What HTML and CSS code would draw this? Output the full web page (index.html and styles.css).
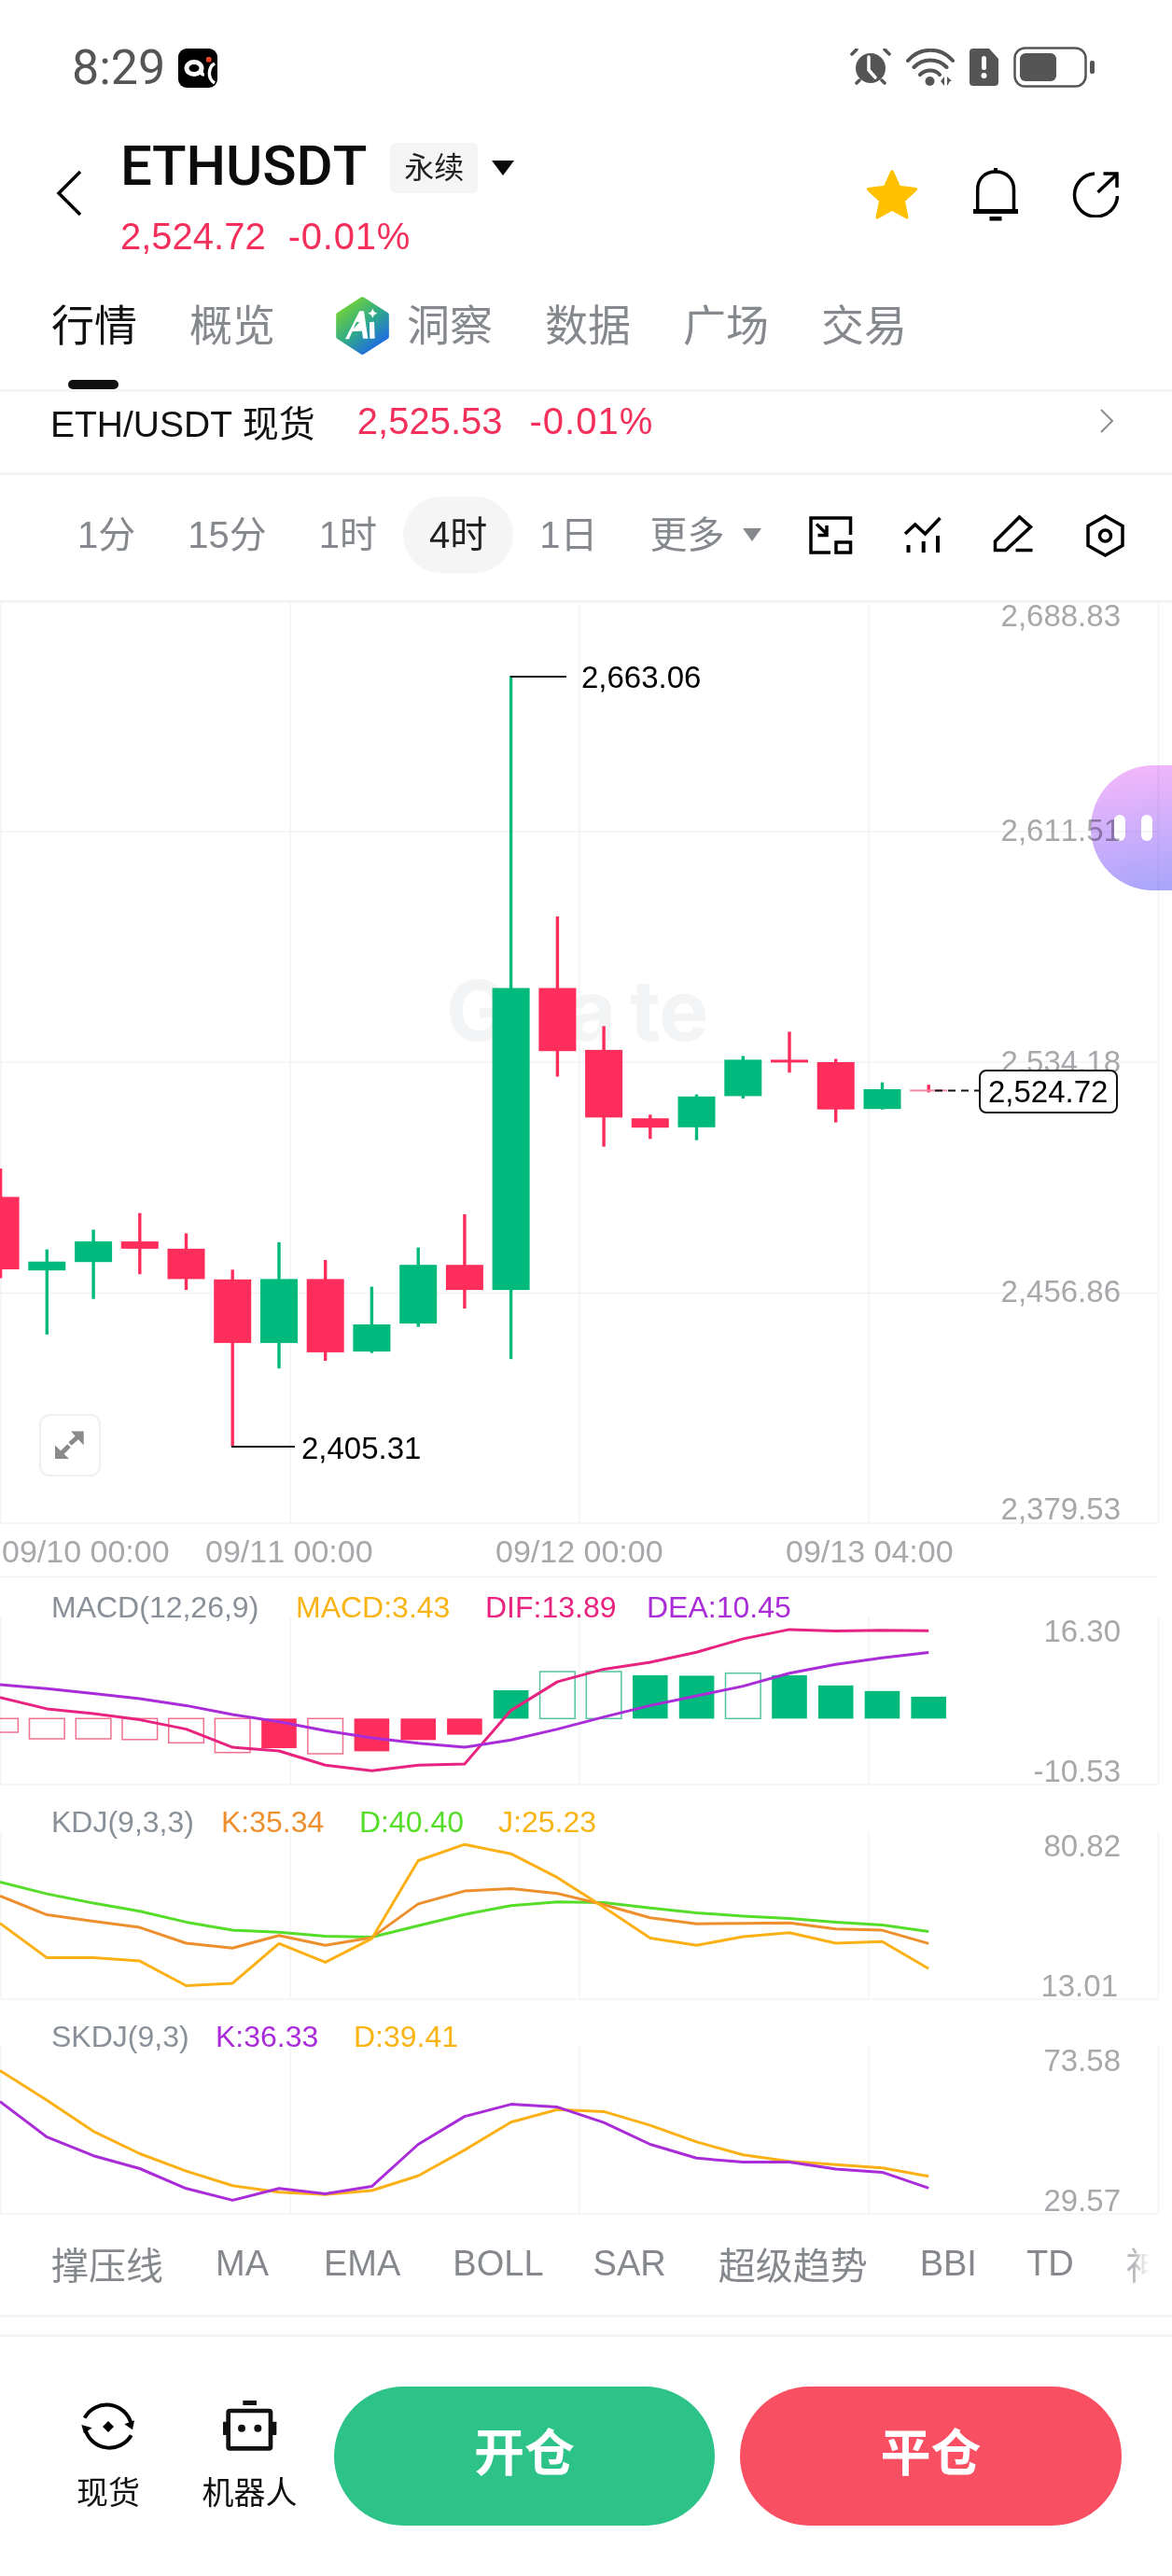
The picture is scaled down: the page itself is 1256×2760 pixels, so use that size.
FILE: index.html
```html
<!DOCTYPE html>
<html lang="zh-CN">
<head>
  <meta charset="UTF-8">
  <title>ETHUSDT</title>
  <link rel="stylesheet" href="styles.css">
</head>
<body>
<div class="page">
  <div class="status">
    <span class="time">8:29</span>
    <svg class="app-icon" width="42" height="42" viewBox="0 0 42 42">
      <rect width="42" height="42" rx="9" fill="#000"/>
      <ellipse cx="17" cy="21" rx="8" ry="6.500" fill="none" stroke="#fff" stroke-width="5"/>
      <path d="M25 20v6c0 1.500 1 2 3 2" fill="none" stroke="#fff" stroke-width="3.500"/>
      <rect x="30" y="9" width="5.500" height="5.500" rx="1.500" fill="#e8442a"/>
      <path d="M39 16c-7 4-8 16 0 21" fill="none" stroke="#fff" stroke-width="3.500"/>
    </svg>
    <div class="status-icons">
      <svg width="44" height="40" viewBox="0 0 44 40">
        <circle cx="22" cy="21" r="16" fill="#555"/>
        <path d="M20 9v14l7 8" fill="none" stroke="#fff" stroke-width="3.500" stroke-linecap="round"/>
        <path d="M2 6l5-5M42 6l-5-5M7 37l3-3M37 37l-3-3" stroke="#555" stroke-width="3.500" stroke-linecap="round"/>
      </svg>
      <svg width="52" height="40" viewBox="0 0 52 40">
        <path d="M2 13C15 -2 37 -2 50 13M8.500 20C18 10 34 10 43.500 20M15 28C21 22 31 22 36 28" fill="none" stroke="#555" stroke-width="4" stroke-linecap="round"/>
        <circle cx="25.500" cy="35" r="5" fill="#555"/>
        <path d="M37 35l4-5v10zM44 30l5 5h-2l-3 5z" fill="#555"/>
      </svg>
      <svg width="31" height="40" viewBox="0 0 31 40">
        <path d="M4 0h17l10 11v25a4 4 0 0 1-4 4H4a4 4 0 0 1-4-4V4a4 4 0 0 1 4-4z" fill="#555"/>
        <rect x="13" y="8" width="5" height="15" rx="2.500" fill="#fff"/>
        <circle cx="15.500" cy="29" r="3" fill="#fff"/>
      </svg>
      <svg width="88" height="44" viewBox="0 0 88 44">
        <rect x="1.500" y="1.500" width="76" height="41" rx="11" fill="none" stroke="#555" stroke-width="2.500"/>
        <rect x="7" y="7" width="39" height="30" rx="6" fill="#555"/>
        <rect x="82" y="15" width="5" height="14" rx="2" fill="#555"/>
      </svg>
    </div>
  </div>

  <div class="header">
    <svg class="back" width="28" height="50" viewBox="0 0 28 50">
      <path d="M26 2L3 25l23 23" fill="none" stroke="#000" stroke-width="3.500"/>
    </svg>
    <div class="title-col">
      <div class="title-row">
        <span class="title">ETHUSDT</span>
        <span class="badge">永续</span>
        <svg width="24" height="16" viewBox="0 0 24 16"><path d="M0 0h24L12 16z" fill="#0a0a0a"/></svg>
      </div>
      <div class="price-row">
        <span>2,524.72</span>
        <span class="pct">-0.01%</span>
      </div>
    </div>
    <div class="actions">
      <svg width="58" height="56" viewBox="0 0 58 56">
        <path d="M29 4l7.500 16.500 18 2.200-13.300 12.300 3.600 17.800L29 44l-15.800 8.800 3.600-17.800L3.500 22.700l18-2.200z" fill="#ffc000" stroke="#ffc000" stroke-width="3.500" stroke-linejoin="round"/>
      </svg>
      <svg width="48" height="57" viewBox="0 0 48 57">
        <path d="M4.700 44V23C4.700 12 12 4 24 4s19.500 8 19.500 19v21" fill="none" stroke="#000" stroke-width="3.500"/>
        <rect y="44" width="48" height="5" fill="#000"/>
        <rect x="17.500" y="52" width="13" height="4.500" fill="#000"/>
        <rect x="22" width="4" height="5" fill="#000"/>
      </svg>
      <svg width="50" height="50" viewBox="0 0 50 50">
        <path d="M24 3A23 23 0 1 0 48.500 27" fill="none" stroke="#000" stroke-width="3.500"/>
        <path d="M27.500 23L47 4.500M33.500 3H48v15" fill="none" stroke="#000" stroke-width="3.500"/>
      </svg>
    </div>
  </div>

  <div class="tabs">
    <span class="tab active">行情</span>
    <span class="tab">概览</span>
    <svg class="ai-icon" width="57" height="62" viewBox="30 20 171 186">
      <defs>
        <linearGradient id="aiFill" x1="0.150" y1="0.100" x2="0.800" y2="0.950">
          <stop offset="0" stop-color="#6fd03c"/>
          <stop offset="0.500" stop-color="#2fa98a"/>
          <stop offset="1" stop-color="#1f68e6"/>
        </linearGradient>
      </defs>
      <polygon points="115,29 192,78 192,148 115,197 39,148 39,78" fill="url(#aiFill)" stroke="url(#aiFill)" stroke-width="17" stroke-linejoin="round"/>
      <path d="M60 156L106 66h14l13 88h-16l-3-24-36 2 28-30-10-2-24 56z" fill="#fff"/>
      <path d="M138 102l15-2 2 54h-16z" fill="#fff"/>
      <path d="M148 58l5 10 10 5-10 5-5 10-5-10-10-5 10-5z" fill="#fff"/>
    </svg>
    <span class="tab tab-ai">洞察</span>
    <span class="tab">数据</span>
    <span class="tab">广场</span>
    <span class="tab">交易</span>
  </div>

  <div class="spot-row">
    <span class="spot-name">ETH/USDT 现货</span>
    <span class="spot-price">2,525.53</span>
    <span class="spot-pct">-0.01%</span>
    <svg class="spot-arrow" width="16" height="28" viewBox="0 0 16 28">
      <path d="M2 2l12 12L2 26" fill="none" stroke="#8a8d91" stroke-width="2"/>
    </svg>
  </div>

  <div class="period-row">
    <span class="period">1分</span>
    <span class="period">15分</span>
    <span class="period">1时</span>
    <span class="period on">4时</span>
    <span class="period">1日</span>
    <span class="period more">更多</span>
    <svg class="more-caret" width="20" height="14" viewBox="0 0 20 14"><path d="M0 0h20L10 14z" fill="#85888c"/></svg>
    <div class="tools">
      <svg width="48" height="48" viewBox="0 0 48 48" fill="none" stroke="#000" stroke-width="3.500">
        <path d="M24 43H3V6h42.500v18M30 32h15.500v11H30z"/>
        <path d="M9 12.500L20 23M20 14v10.500H10.500"/>
      </svg>
      <svg width="48" height="48" viewBox="0 0 48 48" fill="none" stroke="#000" stroke-width="3.500">
        <path d="M6 23l10.700-10L27.500 23 43.500 6"/>
        <path d="M9.500 35v8M25.700 31v12M41 25v18" stroke-width="4"/>
      </svg>
      <svg width="48" height="48" viewBox="0 0 48 48" fill="none" stroke="#000" stroke-width="3.500">
        <path d="M4.500 40.500V31L30.500 5l12 10.600-26.800 24.900zM26.500 40.500h18"/>
      </svg>
      <svg width="48" height="48" viewBox="0 0 48 48" fill="none" stroke="#000" stroke-width="3.500">
        <path d="M24.500 4L43 14.500v21L24.500 46 6 35.500v-21z"/>
        <circle cx="24.500" cy="25" r="6"/>
      </svg>
    </div>
  </div>

  <div class="chart">
    <svg id="chart" class="chart-svg" width="1256" height="1729" viewBox="0 646 1256 1729">
      <g class="grid">
        <path d="M1 646V1632M311 646V1632M621 646V1632M931 646V1632M1241.500 646V1632"/>
        <path d="M1 1732V1912M311 1732V1912M621 1732V1912M931 1732V1912M1241.500 1732V1912"/>
        <path d="M1 1962V2142M311 1962V2142M621 1962V2142M931 1962V2142M1241.500 1962V2142"/>
        <path d="M1 2192V2372M311 2192V2372M621 2192V2372M931 2192V2372M1241.500 2192V2372"/>
        <path d="M0 891H1241M0 1138H1241M0 1385.500H1241"/>
        <path d="M0 1632H1241M0 1689.500H1241M0 1912H1241M0 2142H1241M0 2372H1241"/>
      </g>
      <text class="mark" x="478 608 675 706" y="1115">Gate</text>
      <g id="plot"></g>

      <g class="axis">
        <text x="1201" y="671">2,688.83</text>
        <text x="1201" y="901">2,611.51</text>
        <text x="1201" y="1149">2,534.18</text>
        <text x="1201" y="1395">2,456.86</text>
        <text x="1201" y="1628">2,379.53</text>
        <text x="1201" y="1759">16.30</text>
        <text x="1201" y="1909">-10.53</text>
        <text x="1201" y="1989">80.82</text>
        <text x="1198" y="2139">13.01</text>
        <text x="1201" y="2219">73.58</text>
        <text x="1201" y="2369">29.57</text>
      </g>
      <g class="dates">
        <text x="2" y="1674">09/10 00:00</text>
        <text x="220" y="1674">09/11 00:00</text>
        <text x="531" y="1674">09/12 00:00</text>
        <text x="842" y="1674">09/13 04:00</text>
      </g>

      <path class="lead" d="M547 725H607M248 1550H316"/>
      <text class="callout" x="623" y="737">2,663.06</text>
      <text class="callout" x="323" y="1563">2,405.31</text>

      <path class="dash" d="M1002 1168.500H1050"/>
      <rect class="now-box" x="1050" y="1147" width="147" height="45" rx="7"/>
      <text class="callout" x="1059" y="1181">2,524.72</text>

      <g class="legend">
        <text x="55" y="1733" class="lg-grey">MACD(12,26,9)</text>
        <text x="317" y="1733" class="lg-yellow">MACD:3.43</text>
        <text x="520" y="1733" class="lg-pink">DIF:13.89</text>
        <text x="693" y="1733" class="lg-purple">DEA:10.45</text>
        <text x="55" y="1963" class="lg-grey">KDJ(9,3,3)</text>
        <text x="237" y="1963" class="lg-orange">K:35.34</text>
        <text x="385" y="1963" class="lg-green">D:40.40</text>
        <text x="534" y="1963" class="lg-yellow">J:25.23</text>
        <text x="55" y="2193" class="lg-grey">SKDJ(9,3)</text>
        <text x="231" y="2193" class="lg-purple">K:36.33</text>
        <text x="379" y="2193" class="lg-yellow">D:39.41</text>
      </g>
    </svg>

    <div class="expand">
      <svg width="62" height="62" viewBox="0 0 62 62">
        <path d="M32 16.500h13.700v15zM15 31.500V46h15z" fill="#8a8a8a"/>
        <path d="M40 22l-9 8M22 40l8-8" stroke="#8a8a8a" stroke-width="5"/>
      </svg>
    </div>
    <div class="float-btn"><i></i><i></i></div>
  </div>

  <div class="indicators">
    <div class="ind-list">
      <span class="ind zh">撑压线</span>
      <span class="ind ind-ma">MA</span>
      <span class="ind">EMA</span>
      <span class="ind ind-boll">BOLL</span>
      <span class="ind">SAR</span>
      <span class="ind zh">超级趋势</span>
      <span class="ind">BBI</span>
      <span class="ind ind-td">TD</span>
      <span class="ind zh faded">神</span>
    </div>
  </div>
  <div class="spacer"></div>

  <div class="bottom">
    <div class="tool tool-spot">
      <svg width="60" height="56" viewBox="48 36 180 168" fill="none" stroke="#000" stroke-width="12">
        <path d="M62 92A81 81 0 0 1 212 112"/>
        <path d="M212 148A81 81 0 0 1 64 128"/>
        <path d="M222 100l-32 12 26 18zM52 114l34 10-26 18z" fill="#000" stroke="none"/>
        <path d="M138 102l18 18-18 18-18-18z" fill="#000" stroke="none"/>
      </svg>
      <span>现货</span>
    </div>
    <div class="tool tool-bot">
      <svg width="60" height="56" viewBox="505 39 180 168">
        <rect x="572" y="39" width="44" height="15" fill="#111"/>
        <rect x="525" y="72" width="136" height="121" rx="5" fill="none" stroke="#111" stroke-width="14"/>
        <rect x="508" y="107" width="12" height="43" rx="2" fill="#111"/>
        <rect x="666" y="107" width="14" height="43" rx="2" fill="#111"/>
        <circle cx="568" cy="128" r="12" fill="#111"/>
        <circle cx="620" cy="128" r="12" fill="#111"/>
      </svg>
      <span>机器人</span>
    </div>
    <div class="trade open">开仓</div>
    <div class="trade close">平仓</div>
  </div>
</div>
<script src="chart.js"></script>
</body>
</html>
```

FILE: styles.css
```css
html, body {
  margin: 0;
  background: #fff;
}
body {
  font-family: "Liberation Sans", "Noto Sans CJK SC", sans-serif;
  font-kerning: none;
  color: #111;
}
svg {
  display: block;
  flex-shrink: 0;
}
.page {
  width: 1256px;
  height: 2760px;
  overflow: hidden;
}

/* status bar */
.status {
  display: flex;
  align-items: flex-start;
  height: 146px;
  padding: 52px 82px 0 77px;
  box-sizing: border-box;
}
.time {
  font-family: Roboto, sans-serif;
  font-size: 52px;
  line-height: 42px;
  color: #555;
}
.app-icon {
  margin-left: 14px;
}
.status-icons {
  display: flex;
  align-items: center;
  gap: 16px;
  margin-left: auto;
  margin-top: -2px;
}

/* header */
.header {
  display: flex;
  height: 144px;
  padding: 0 57px 0 60px;
  box-sizing: border-box;
}
.back {
  margin-top: 36px;
}
.title-col {
  margin-left: 41px;
}
.title-row {
  display: flex;
  align-items: center;
  margin-top: 7px;
  height: 54px;
}
.title {
  font-family: Roboto, sans-serif;
  font-weight: 500;
  font-size: 60px;
  line-height: 54px;
  color: #0c0c0c;
  margin-top: -4px;
}
.badge {
  margin-left: 25px;
  margin-right: 15px;
  width: 94px;
  height: 54px;
  line-height: 54px;
  text-align: center;
  background: #f5f5f5;
  border-radius: 6px;
  font-size: 32px;
  color: #222;
}
.price-row {
  display: flex;
  margin-top: 23px;
  font-size: 40px;
  line-height: 46px;
  color: #f3305c;
}
.pct {
  margin-left: 24px;
  letter-spacing: 0.8px;
}
.actions {
  display: flex;
  align-items: center;
  gap: 58px;
  margin-left: auto;
  height: 60px;
  margin-top: 32px;
}

/* tabs */
.tabs {
  display: flex;
  align-items: center;
  height: 130px;
  padding: 0 0 9px 55px;
  box-sizing: border-box;
  border-bottom: 3px solid #f3f4f5;
}
.tab {
  position: relative;
  font-size: 46px;
  line-height: 60px;
  margin-right: 56px;
  color: #85888c;
}
.tab.active {
  color: #111;
}
.tab.active::after {
  content: "";
  position: absolute;
  left: 18px;
  top: 88px;
  width: 54px;
  height: 10px;
  border-radius: 5px;
  background: #111;
}
.ai-icon {
  margin: 0 19px 0 9px;
}

/* spot row */
.spot-row {
  display: flex;
  align-items: center;
  height: 89px;
  padding: 0 62px 24px 54px;
  box-sizing: border-box;
  border-bottom: 3px solid #f3f4f5;
}
.spot-name {
  font-size: 39px;
  color: #111;
}
.spot-price {
  margin-left: 45px;
  font-size: 40px;
  color: #f3305c;
}
.spot-pct {
  margin-left: 29px;
  font-size: 40px;
  letter-spacing: 1px;
  color: #f3305c;
}
.spot-arrow {
  margin-left: auto;
}

/* period row */
.period-row {
  display: flex;
  align-items: center;
  height: 137px;
  padding: 0 48px 7px 55px;
  box-sizing: border-box;
  border-bottom: 3px solid #f3f4f5;
}
.period {
  height: 82px;
  line-height: 82px;
  padding: 0 28px;
  border-radius: 41px;
  font-size: 40px;
  color: #85888c;
}
.period.on {
  background: #f5f5f5;
  color: #222;
}
.more-caret {
  margin-left: -9px;
}
.tools {
  display: flex;
  gap: 50px;
  margin-left: auto;
}

/* chart */
.chart {
  position: relative;
  height: 1729px;
}
.chart-svg {
  overflow: visible;
}
.grid path {
  fill: none;
  stroke: #f2f3f4;
  stroke-width: 1.5;
}
.mark {
  font-family: Inter, sans-serif;
  font-weight: 700;
  font-size: 90px;
  fill: #f3f4f5;
}
.axis text {
  font-size: 33px;
  fill: #a6a8ab;
  text-anchor: end;
}
.dates text {
  font-size: 34px;
  fill: #a6a8ab;
}
.lead {
  fill: none;
  stroke: #111;
  stroke-width: 2;
}
.callout {
  font-size: 33px;
  fill: #000;
}
.dash {
  fill: none;
  stroke: #111;
  stroke-width: 2;
  stroke-dasharray: 8 6;
}
.now-box {
  fill: #fff;
  stroke: #111;
  stroke-width: 2;
}
.legend text {
  font-size: 32px;
}
.lg-grey { fill: #8a9099; }
.lg-yellow { fill: #f9b312; }
.lg-pink { fill: #e8237f; }
.lg-purple { fill: #a92cd8; }
.lg-orange { fill: #ee8f2e; }
.lg-green { fill: #55dd2a; }

.expand {
  position: absolute;
  left: 42px;
  top: 869px;
  width: 66px;
  height: 67px;
  box-sizing: border-box;
  border: 2px solid #f0f0f0;
  border-radius: 11px;
  background: #fff;
}
.float-btn {
  position: absolute;
  right: 0;
  top: 174px;
  width: 87px;
  height: 134px;
  display: flex;
  align-items: center;
  gap: 17px;
  padding-left: 25px;
  box-sizing: border-box;
  border-radius: 67px 0 0 67px;
  background: linear-gradient(170deg, #f7b8fb, #a8a5fb);
  mix-blend-mode: multiply;
}
.float-btn i {
  width: 12px;
  height: 28px;
  border-radius: 6px;
  background: #fff;
}

/* indicator row */
.indicators {
  height: 108px;
  padding: 0 0 0 55px;
  box-sizing: border-box;
  border-bottom: 3px solid #f3f4f5;
}
.ind-list {
  display: flex;
  gap: 56px;
  height: 100px;
  align-items: center;
}
.ind {
  flex-shrink: 0;
  font-size: 38px;
  color: #85888c;
  white-space: nowrap;
}
.ind.zh {
  font-size: 40px;
}
.ind-ma {
  margin-right: 3px;
}
.ind-boll {
  margin-right: -3px;
}
.ind-td {
  margin-left: -3px;
}
.ind.faded {
  color: #b5b7ba;
  -webkit-mask-image: linear-gradient(to right, #000 20%, transparent 62%);
  mask-image: linear-gradient(to right, #000 20%, transparent 62%);
}
.spacer {
  height: 21px;
  box-sizing: border-box;
  border-bottom: 3px solid #f3f4f5;
}

/* bottom bar */
.bottom {
  display: flex;
  align-items: flex-start;
  padding-top: 53px;
}
.tool {
  display: flex;
  flex-direction: column;
  align-items: center;
  padding-top: 15px;
  font-size: 34px;
  line-height: 40px;
  color: #111;
}
.tool span {
  margin-top: 23px;
  white-space: nowrap;
}
.tool-spot {
  width: 66px;
  margin-left: 83px;
}
.tool-bot {
  width: 101px;
  margin-left: 68px;
}
.trade {
  height: 149px;
  line-height: 145px;
  border-radius: 75px;
  text-align: center;
  font-size: 54px;
  font-weight: 700;
  color: #fff;
}
.open {
  width: 408px;
  margin-left: 40px;
  background: #2dc287;
}
.close {
  width: 409px;
  margin-left: 27px;
  background: #f94f63;
}
```

FILE: chart.js
```js
// numbers below are read off the picture: y is page px after the two helpers
var RED = '#ff2d5c', GREEN = '#00b97c';
var yA = function (p) { return 1020 + p / 2.306; };
var yB = function (p) { return 1680 + p / 2.306; };
var xAt = function (i) { return 0.6 + 49.73 * i; };

// color, wick top, body top, body bottom, wick bottom
var candles = [
  ['r', 535, 605, 784, 806],
  ['g', 735, 765, 787, 945],
  ['g', 686, 715, 766, 857],
  ['r', 645, 715, 733, 796],
  ['r', 695, 733, 808, 835],
  ['r', 785, 809, 966, 1222],
  ['g', 717, 808, 966, 1029],
  ['r', 761, 808, 989, 1010],
  ['g', 827, 920, 987, 991],
  ['g', 730, 773, 918, 926],
  ['r', 648, 773, 835, 881],
  ['g', -682, 89, 835, 1006],
  ['r', -88, 89, 245, 308],
  ['r', 183, 242, 409, 481],
  ['r', 402, 411, 434, 462],
  ['g', 352, 357, 433, 465],
  ['g', 257, 266, 356, 362],
  ['r', 197, 266, 273, 298],
  ['r', 264, 272, 389, 421],
  ['g', 322, 339, 388, 389]
];

// bar top in zoom px, positive side goes down from the zero line at 372
var hist = [
  [406, 1], [422, 1], [422, 1], [424, 1], [432, 1], [456, 1], [445, 0], [459, 1],
  [453, 0], [425, 0], [412, 0], [302, 0], [256, 1], [256, 1], [265, 0], [266, 0],
  [260, 1], [265, 0], [290, 0], [304, 0], [318, 0]
];

var lines = [
  ['#e8237f', [320, 348, 360, 375, 398, 443, 452, 487, 501, 487, 484, 352, 281, 250, 233, 208, 175, 152, 156, 154, 155]],
  ['#a92cd8', [288, 298, 310, 323, 340, 362, 380, 402, 420, 433, 443, 425, 398, 368, 340, 316, 292, 260, 238, 222, 209]],
  ['#55dd2a', [776, 805, 828, 848, 875, 895, 900, 910, 912, 884, 856, 834, 825, 827, 840, 852, 860, 866, 875, 882, 898]],
  ['#ee8f2e', [810, 857, 873, 888, 927, 939, 908, 932, 913, 830, 798, 792, 804, 832, 864, 879, 878, 877, 892, 895, 928]],
  ['#fbb016', [878, 963, 963, 971, 1032, 1026, 928, 974, 916, 723, 683, 706, 765, 838, 914, 932, 911, 901, 927, 923, 990]],
  ['#fbb016', [1242, 1315, 1392, 1447, 1490, 1526, 1542, 1548, 1538, 1502, 1438, 1369, 1338, 1343, 1377, 1418, 1450, 1466, 1474, 1482, 1503]],
  ['#a92cd8', [1318, 1406, 1452, 1484, 1533, 1562, 1533, 1546, 1528, 1424, 1355, 1325, 1332, 1370, 1424, 1458, 1468, 1468, 1485, 1493, 1532]]
];

function rect(x, y, w, h, attrs) {
  return '<rect x="' + x.toFixed(1) + '" y="' + y.toFixed(1) + '" width="' + w + '" height="' + h.toFixed(1) + '" ' + attrs + '/>';
}

var out = '';

candles.forEach(function (c, i) {
  var x = xAt(i), col = c[0] === 'r' ? RED : GREEN;
  out += rect(x - 1.7, yA(c[1]), 3.4, yA(c[4]) - yA(c[1]), 'fill="' + col + '"');
  out += rect(x - 20, yA(c[2]), 40, yA(c[3]) - yA(c[2]), 'fill="' + col + '"');
});
// the last candle is still forming, drawn thin and pale
out += rect(xAt(20) - 1.7, yA(328), 3.4, yA(347) - yA(328), 'fill="' + RED + '"');
out += rect(xAt(20) - 20, yA(340), 40, 2, 'fill="#f28aa3"');

hist.forEach(function (b, i) {
  var x = xAt(i) - 18.8, up = b[0] < 372;
  var top = yB(Math.min(b[0], 372)), h = Math.abs(yB(b[0]) - yB(372));
  var col = up ? GREEN : RED;
  if (b[1]) {
    out += rect(x, top, 37.6, h, 'fill="none" stroke="' + (up ? '#54c5a0' : '#f0708f') + '" stroke-width="1.5"');
  } else {
    out += rect(x, top, 37.6, h, 'fill="' + col + '"');
  }
});

lines.forEach(function (l) {
  var pts = l[1].map(function (p, i) {
    return (i === 0 ? 0 : xAt(i)).toFixed(1) + ',' + yB(p).toFixed(1);
  }).join(' ');
  out += '<polyline points="' + pts + '" fill="none" stroke="' + l[0] + '" stroke-width="3" stroke-linejoin="round"/>';
});

document.getElementById('plot').innerHTML = out;
```
